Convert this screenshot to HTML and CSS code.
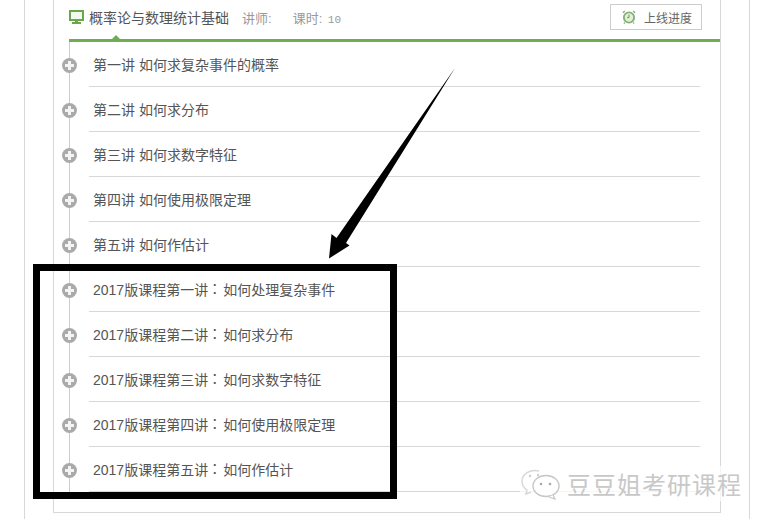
FILE: index.html
```html
<!DOCTYPE html>
<html lang="zh-CN">
<head>
  <meta charset="UTF-8">
  <title>概率论与数理统计基础</title>
  <link rel="stylesheet" href="styles.css">
</head>
<body>
  <div class="page">
    <div class="panel">

      <!-- cabecalho do curso -->
      <div class="course-head">
        <svg class="icon-monitor" width="15" height="14" viewBox="0 0 15 14">
          <rect x="1" y="1" width="13" height="9" fill="#f4f9f0" stroke="#6aa64c" stroke-width="2"/>
          <rect x="6" y="11" width="3" height="1" fill="#6aa64c"/>
          <rect x="3" y="12" width="9" height="2" fill="#6aa64c"/>
        </svg>
        <h2 class="course-title">概率论与数理统计基础</h2>
        <span class="course-meta meta-teacher">讲师:</span>
        <span class="course-meta">课时: <span class="course-num">10</span></span>
        <a class="btn-progress">
          <svg width="14" height="14" viewBox="0 0 15 15">
            <circle cx="7.5" cy="8" r="5.5" fill="#e4efd9" stroke="#86b07a" stroke-width="2"/>
            <path d="M7.5 5v3.2H5.5" fill="none" stroke="#5c8f48" stroke-width="1"/>
            <path d="M1 3l2-2M14 3l-2-2M3 13.5l-1 1M12 13.5l1 1" stroke="#86b07a" stroke-width="1.5"/>
          </svg>
          上线进度
        </a>
      </div>

      <ul class="lessons">
        <li class="lesson"><span class="plus"></span><div class="lesson-name">第一讲 如何求复杂事件的概率</div></li>
        <li class="lesson"><span class="plus"></span><div class="lesson-name">第二讲 如何求分布</div></li>
        <li class="lesson"><span class="plus"></span><div class="lesson-name">第三讲 如何求数字特征</div></li>
        <li class="lesson"><span class="plus"></span><div class="lesson-name">第四讲 如何使用极限定理</div></li>
        <li class="lesson"><span class="plus"></span><div class="lesson-name">第五讲 如何作估计</div></li>
        <li class="lesson"><span class="plus"></span><div class="lesson-name">2017版课程第一讲<span class="colon">：</span>如何处理复杂事件</div></li>
        <li class="lesson"><span class="plus"></span><div class="lesson-name">2017版课程第二讲<span class="colon">：</span>如何求分布</div></li>
        <li class="lesson"><span class="plus"></span><div class="lesson-name">2017版课程第三讲<span class="colon">：</span>如何求数字特征</div></li>
        <li class="lesson"><span class="plus"></span><div class="lesson-name">2017版课程第四讲<span class="colon">：</span>如何使用极限定理</div></li>
        <li class="lesson"><span class="plus"></span><div class="lesson-name">2017版课程第五讲<span class="colon">：</span>如何作估计</div></li>
      </ul>
    </div>
  </div>

  <!-- anotacoes por cima da captura -->
  <div class="mark-box"></div>
  <svg class="mark-arrow" width="763" height="519" viewBox="0 0 763 519">
    <path d="M455 68 L346 243 L349.5 245.5 L329 258.5 L331.5 234 L336.5 238 Z" fill="#000"/>
  </svg>

  <div class="watermark">
    <svg width="42" height="32" viewBox="0 0 42 32">
      <path d="M19 3C10 1 2 6 2 13c0 4 2 7 5 9l-1 4 5-2" fill="#fff" stroke="#d6d6d6" stroke-width="1.4"/>
      <ellipse cx="26" cy="18" rx="13" ry="10.5" fill="#fff" stroke="#c6c6c6" stroke-width="1.4"/>
      <path d="M33 27l2 4-6-2" fill="#fff" stroke="#c6c6c6" stroke-width="1.2"/>
      <circle cx="21" cy="16" r="1.3" fill="#aaa"/>
      <circle cx="30" cy="16" r="1.3" fill="#aaa"/>
      <circle cx="10" cy="8" r="1.2" fill="#ccc"/>
      <circle cx="18" cy="7" r="1.2" fill="#ccc"/>
    </svg>
    <span class="watermark-text">豆豆姐考研课程</span>
  </div>
</body>
</html>
```

FILE: styles.css
```css
/* ---------- base ---------- */
* {
  box-sizing: border-box;
  margin: 0;
  padding: 0;
}
html, body {
  height: 519px;
  overflow: hidden;
}
body {
  background: #fff;
  color: #555;
  font-family: "Liberation Sans", "Noto Sans CJK SC", sans-serif;
  font-size: 14px;
}

/* ---------- frames ---------- */
.page {
  width: 726px;
  height: 519px;
  margin-left: 24px;
  padding-left: 28px;
  border-left: 1px solid #d8d8d8;
  border-right: 1px solid #d8d8d8;
}
.panel {
  width: 668px;
  height: 513px;
  padding-left: 15px;
  border-left: 1px solid #d8d8d8;
  border-right: 1px solid #d8d8d8;
  border-bottom: 1px solid #d8d8d8;
}

/* ---------- course header ---------- */
.course-head {
  display: flex;
  align-items: center;
  height: 42px;
  padding: 0 18px 5px 0;
  border-bottom: 3px solid #6fac52;
  position: relative;
}
.course-head::after {
  content: "";
  position: absolute;
  left: 43px;
  bottom: 0;
  border: 4px solid transparent;
  border-top: 0;
  border-bottom-color: #6fac52;
}
.icon-monitor {
  margin-right: 5px;
}
.course-title {
  font-size: 14px;
  font-weight: 400;
  color: #555;
}
.course-meta {
  font-size: 13px;
  color: #999;
  margin-left: 13px;
}
.meta-teacher {
  margin-right: 8px;
}
.course-num {
  font-family: "Liberation Mono", monospace;
  font-size: 11px;
  margin-left: 2px;
}
.btn-progress {
  display: flex;
  align-items: center;
  gap: 8px;
  width: 92px;
  height: 26px;
  margin-left: auto;
  padding-left: 11px;
  border: 1px solid #ccc;
  font-size: 12px;
  color: #666;
}

/* ---------- lessons ---------- */
.lessons {
  list-style: none;
  border-left: 1px solid #ccc;
}
.lesson {
  display: flex;
  align-items: center;
  height: 45px;
}
.plus {
  flex: none;
  position: relative;
  width: 15px;
  height: 15px;
  margin: 2px 0 0 -8px;
  border-radius: 50%;
  background: #aaa;
}
.plus::before,
.plus::after {
  content: "";
  position: absolute;
  background: #f4f4f4;
}
.plus::before {
  left: 3px;
  top: 6px;
  width: 9px;
  height: 3px;
}
.plus::after {
  left: 6px;
  top: 3px;
  width: 3px;
  height: 9px;
}
.lesson-name {
  flex: none;
  width: 611px;
  height: 45px;
  margin-left: 12px;
  padding: 1px 0 0 4px;
  line-height: 44px;
  border-bottom: 1px solid #d8d8d8;
}
/* dois pontos centralizados, como no original */
.colon {
  padding-left: 3px;
  letter-spacing: -2px;
  line-height: 1;
  vertical-align: 2px;
}

/* ---------- annotations ---------- */
.mark-box {
  position: absolute;
  left: 33px;
  top: 264px;
  width: 364px;
  height: 235px;
  border: 7px solid #000;
}
.mark-arrow {
  position: absolute;
  left: 0;
  top: 0;
}
.watermark {
  position: absolute;
  left: 520px;
  top: 466px;
  display: flex;
  align-items: center;
  gap: 5px;
  background: rgba(255, 255, 255, 0.75);
}
.watermark-text {
  font-size: 24px;
  letter-spacing: 1px;
  color: #c8c8c8;
}
```
